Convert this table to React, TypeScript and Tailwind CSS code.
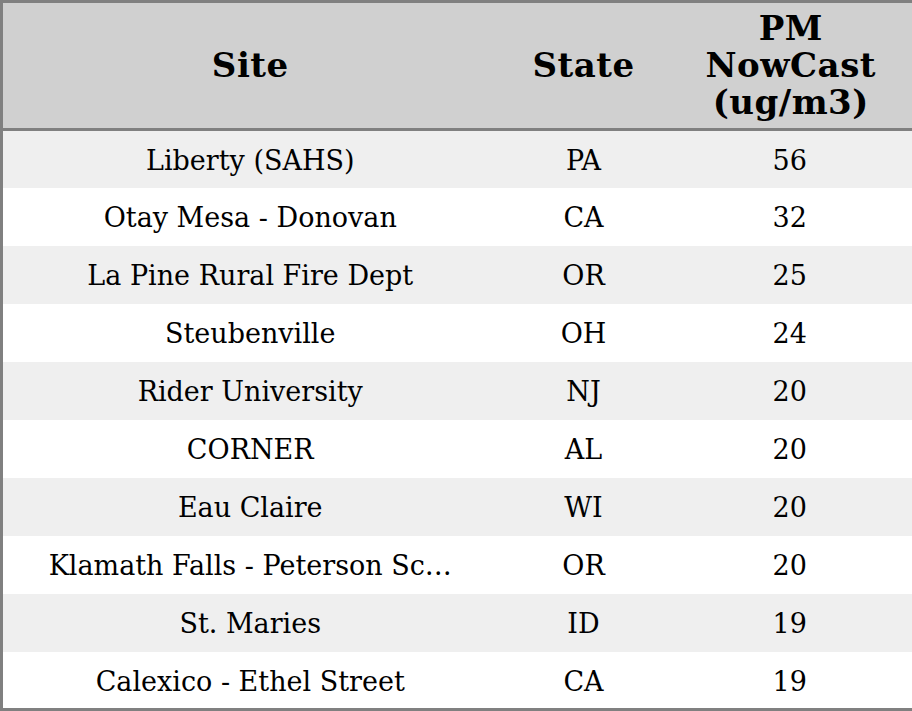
const rows = [
  { site: "Liberty (SAHS)", state: "PA", pm: 56 },
  { site: "Otay Mesa - Donovan", state: "CA", pm: 32 },
  { site: "La Pine Rural Fire Dept", state: "OR", pm: 25 },
  { site: "Steubenville", state: "OH", pm: 24 },
  { site: "Rider University", state: "NJ", pm: 20 },
  { site: "CORNER", state: "AL", pm: 20 },
  { site: "Eau Claire", state: "WI", pm: 20 },
  { site: "Klamath Falls - Peterson Sc…", state: "OR", pm: 20 },
  { site: "St. Maries", state: "ID", pm: 19 },
  { site: "Calexico - Ethel Street", state: "CA", pm: 19 },
];

export default function App() {
  return (
    <div className="w-[912px] h-[711px] bg-white font-['DejaVu_Serif',serif] text-black">
      <table className="w-[912px] border-collapse border-[3px] border-[#808080] table-fixed">
        <colgroup>
          <col className="w-[496px]" />
          <col className="w-[172px]" />
          <col className="w-[244px]" />
        </colgroup>
        <thead>
          <tr className="bg-[#d0d0d0] h-[128px] border-b-[3px] border-[#808080]">
            <th className="text-[34px] leading-[37px] tracking-[0.5px] font-bold">Site</th>
            <th className="text-[34px] leading-[37px] tracking-[0.5px] font-bold">State</th>
            <th className="text-[34px] leading-[37px] tracking-[0.5px] font-bold">
              PM
              <br />
              NowCast
              <br />
              (ug/m3)
            </th>
          </tr>
        </thead>
        <tbody>
          {rows.map((r, i) => (
            <tr key={i} className={i % 2 === 0 ? "bg-[#efefef] h-[58px]" : "bg-white h-[58px]"}>
              <td className="text-center text-[27px] pt-1 px-8 whitespace-nowrap">{r.site}</td>
              <td className="text-center text-[27px] pt-1">{r.state}</td>
              <td className="text-center text-[27px] pt-1 pr-[2px]">{r.pm}</td>
            </tr>
          ))}
        </tbody>
      </table>
    </div>
  );
}
